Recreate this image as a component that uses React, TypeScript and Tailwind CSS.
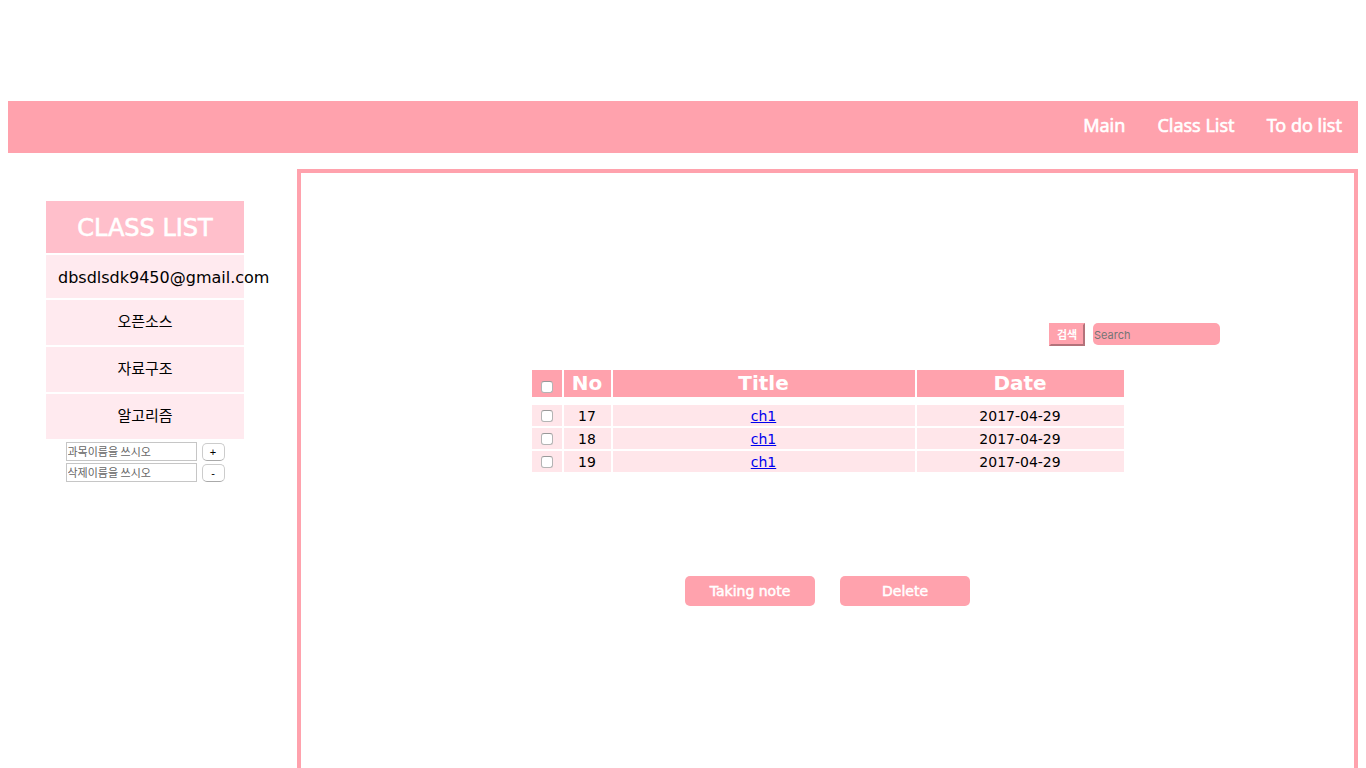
import React from "react";

const navItems = ["Main", "Class List", "To do list"];
const classes = ["오픈소스", "자료구조", "알고리즘"];
const notes = [
  { no: 17, title: "ch1", date: "2017-04-29" },
  { no: 18, title: "ch1", date: "2017-04-29" },
  { no: 19, title: "ch1", date: "2017-04-29" },
];

const korean = "font-['Noto_Sans_CJK_KR',sans-serif]";
const verdana = "font-['DejaVu_Sans',Verdana,sans-serif]";
const cell = "bg-[#ffe6ea] p-0 pt-0.5";

function Check({ label }: { label: string }) {
  return (
    <input
      type="checkbox"
      aria-label={label}
      className="block size-3 appearance-none rounded-[3px] border border-[#b4b4b4] border-t-[#999999] bg-white checked:bg-blue-600"
    />
  );
}

function ClassForm({ placeholder, sign, label }: { placeholder: string; sign: string; label: string }) {
  return (
    <form className="flex items-center justify-center gap-[5px]" onSubmit={(e) => e.preventDefault()}>
      <input
        type="text"
        aria-label={label}
        placeholder={placeholder}
        className={`h-[19px] w-[131px] border border-[#c6c6c6] bg-white px-px pb-0.5 text-[11px] leading-4 placeholder:text-[#666666] ${korean}`}
      />
      <button
        type="submit"
        aria-label={label}
        className="flex h-[18px] w-[23px] items-center justify-center rounded-[5px] border border-[#cccccc] border-b-[#aaaaaa] bg-white font-['Liberation_Sans',Arial,sans-serif] text-[11px] leading-3 text-black"
      >
        {sign}
      </button>
    </form>
  );
}

export default function App() {
  return (
    <div className={`flex h-screen min-h-[640px] flex-col overflow-hidden bg-white px-2 pt-[101px] text-black ${verdana}`}>
      <nav className="flex h-[52px] shrink-0 items-center justify-end gap-8 bg-[#ffa2ad] px-4 pb-1 font-['Noto_Sans',sans-serif] text-lg font-normal text-white [-webkit-text-stroke:0.6px_white]">
        {navItems.map((item) => (
          <a key={item} href="#">
            {item}
          </a>
        ))}
      </nav>

      <div className="mt-4 flex min-h-0 flex-1">
        <aside className="w-[289px] shrink-0 pt-8 pl-[38px]">
          <div className="flex w-[198px] flex-col gap-0.5 text-center">
            <h2 className="flex h-[52px] items-center justify-center bg-[#ffbfcb] pt-0.5 text-2xl text-white [-webkit-text-stroke:0.6px_white]">
              CLASS LIST
            </h2>
            <div className="h-[43px] bg-[#ffeaef] px-3 text-left text-base leading-[46px]">dbsdlsdk9450@gmail.com</div>
            {classes.map((name) => (
              <a key={name} href="#" className={`h-[45px] bg-[#ffeaef] text-[15px] leading-[42px] ${korean}`}>
                {name}
              </a>
            ))}
            <div className="mt-px flex flex-col gap-0.5">
              <ClassForm placeholder="과목이름을 쓰시오" sign="+" label="과목 추가" />
              <ClassForm placeholder="삭제이름을 쓰시오" sign="-" label="과목 삭제" />
            </div>
          </div>
        </aside>

        <main className="flex min-w-0 flex-1 flex-col border-4 border-b-0 border-[#ffa2ad] pt-[150px]">
          <form className="flex justify-end gap-2 pr-[134px]" onSubmit={(e) => e.preventDefault()}>
            <button
              type="submit"
              className={`h-[23px] w-9 border-2 border-t-[#ffa2ad] border-r-[#b4727a] border-b-[#b4727a] border-l-[#ffa2ad] bg-[#ffa2ad] pb-0.5 text-[11px] leading-4 font-bold text-white ${korean}`}
            >
              검색
            </button>
            <input
              type="search"
              aria-label="Search"
              placeholder="Search"
              className="h-[22px] w-[127px] rounded-[5px] bg-[#ffa2ad] pt-0.5 pl-px font-['Inter',sans-serif] text-[11px] placeholder:text-[#757575]"
            />
          </form>

          <table className="mx-auto mt-[22px] w-[596px] table-fixed border-separate border-spacing-0.5 text-center text-sm">
            <colgroup>
              <col className="w-[30px]" />
              <col className="w-[47px]" />
              <col />
              <col className="w-[207px]" />
            </colgroup>
            <thead>
              <tr className="h-[27px] text-xl leading-[27px] font-bold text-white">
                <th className="bg-[#ffa2ad] p-0 align-bottom">
                  <div className="flex justify-center pb-1">
                    <Check label="Select all" />
                  </div>
                </th>
                <th className="bg-[#ffa2ad] p-0">No</th>
                <th className="bg-[#ffa2ad] p-0">Title</th>
                <th className="bg-[#ffa2ad] p-0">Date</th>
              </tr>
            </thead>
            <tbody>
              <tr aria-hidden="true" className="h-1">
                <td colSpan={4} className="p-0" />
              </tr>
              {notes.map((note) => (
                <tr key={note.no} className="h-[21px] leading-[19px]">
                  <td className="bg-[#ffe6ea] p-0">
                    <div className="flex justify-center">
                      <Check label={`Select note ${note.no}`} />
                    </div>
                  </td>
                  <td className={cell}>{note.no}</td>
                  <td className={cell}>
                    <a href="#" className="text-[#0000ee] underline">
                      {note.title}
                    </a>
                  </td>
                  <td className={cell}>{note.date}</td>
                </tr>
              ))}
            </tbody>
          </table>

          <div className="mt-[102px] flex justify-center gap-[25px] text-sm text-white [-webkit-text-stroke:0.5px_white]">
            <button type="button" className="h-[30px] w-[130px] rounded-[5px] bg-[#ffa2ad]">
              Taking note
            </button>
            <button type="button" className="h-[30px] w-[130px] rounded-[5px] bg-[#ffa2ad]">
              Delete
            </button>
          </div>
        </main>
      </div>
    </div>
  );
}
